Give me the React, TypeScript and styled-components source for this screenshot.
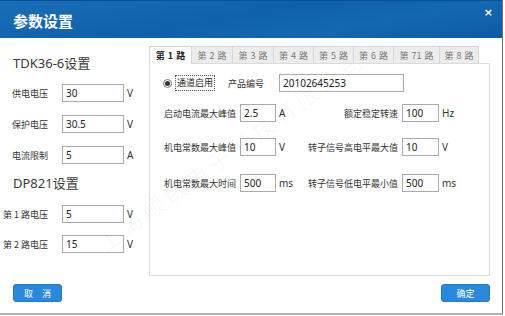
import styled, { createGlobalStyle } from "styled-components";

const GlobalStyle = createGlobalStyle`
body {
    margin: 0;
    background: #fff;
    font-family: "Noto Sans", "Noto Sans CJK SC", sans-serif;
}
`

const Window = styled.div`
position: relative;
width: 503px;
height: 315px;
box-sizing: border-box;
border-right: 1px solid #6f6f6f;
border-bottom: 2px solid #b4b4b4;
display: flex;
flex-direction: column;
background: #fff;
overflow: hidden;
`

const TitleBar = styled.div`
position: relative;
height: 38px;
flex-shrink: 0;
display: flex;
align-items: center;
padding-left: 13px;
background: linear-gradient(170deg, #1a6db8 0%, #0f61ab 45%, #1467b1 70%, #0d5ba4 100%);
border-top: 1px solid #0b4f90;
box-sizing: border-box;
`

const Title = styled.h1`
margin: 2px 0 0;
font-size: 15px;
font-weight: bold;
color: #fff;
font-family: "Noto Sans CJK SC", sans-serif;
`

const Close = styled.span`
position: absolute;
right: 9px;
top: 5px;
color: #fff;
font-size: 11px;
font-weight: bold;
font-family: "DejaVu Sans", sans-serif;
`

const Main = styled.div`
display: flex;
height: 238px;
`

const Side = styled.div`
width: 149px;
flex-shrink: 0;
padding-top: 17px;
box-sizing: border-box;
`

const Heading = styled.div<{ $mt?: number }>`
margin: ${p => p.$mt ?? 0}px 0 0 13px;
font-size: 13px;
line-height: 16px;
color: #3a3a3a;
font-family: "Noto Sans", "Noto Sans CJK SC", sans-serif;
`

const SideRow = styled.div<{ $mt: number }>`
display: flex;
align-items: center;
height: 18px;
margin-top: ${p => p.$mt}px;
`

const SideLabel = styled.span`
width: 48px;
text-align: right;
font-size: 9px;
color: #333;
white-space: nowrap;
font-family: "Noto Sans CJK SC", sans-serif;
`

const Input = styled.input<{ $w: number }>`
width: ${p => p.$w}px;
height: 18px;
box-sizing: border-box;
margin: 0 0 0 ${p => (p.$w > 50 ? 0 : 4)}px;
padding: 0 3px;
border: 1px solid #a9a9a9;
background: #fff;
font-size: 10px;
color: #222;
font-family: "Noto Sans", sans-serif;
outline: none;
`

const SideInput = styled(Input)`
margin-left: 14px;
`

const Unit = styled.span<{ $w?: number }>`
width: ${p => p.$w ?? 20}px;
padding-left: 3px;
box-sizing: border-box;
font-size: 10px;
color: #333;
font-family: "Noto Sans", sans-serif;
`

const Tabs = styled.div`
margin-top: 8px;
width: 341px;
display: flex;
flex-direction: column;
`

const TabList = styled.div`
display: flex;
height: 17px;
position: relative;
z-index: 1;
`

const Tab = styled.div<{ $active?: boolean; $w: number }>`
width: ${p => p.$w}px;
box-sizing: border-box;
height: ${p => (p.$active ? 18 : 17)}px;
display: flex;
align-items: center;
justify-content: center;
font-size: 9px;
font-family: "Noto Sans CJK SC", sans-serif;
color: ${p => (p.$active ? "#222" : "#777")};
font-weight: ${p => (p.$active ? "bold" : "normal")};
background: ${p => (p.$active ? "#fff" : "#ececec")};
border: 1px solid #d6d6d6;
border-bottom: none;
margin-right: -1px;
word-spacing: 1px;
`

const Panel = styled.div`
height: 213px;
box-sizing: border-box;
border: 1px solid #dcdcdc;
background: #fff;
padding-top: 10px;
`

const Row = styled.div<{ $mt?: number }>`
display: flex;
align-items: center;
height: 18px;
margin-top: ${p => p.$mt ?? 0}px;
`

const Radio = styled.span`
width: 9px;
height: 9px;
margin-left: 13px;
box-sizing: border-box;
border: 1px solid #7a7a7a;
border-radius: 50%;
display: flex;
align-items: center;
justify-content: center;
background: #fff;
&::after {
    content: "";
    width: 5px;
    height: 5px;
    border-radius: 50%;
    background: #333;
}
`

const RadioText = styled.span`
margin-left: 3px;
padding: 1px 1px;
border: 1px dotted #555;
font-size: 9px;
line-height: 12px;
color: #222;
font-family: "Noto Sans CJK SC", sans-serif;
`

const FieldLabel = styled.span<{ $w: number; $right?: boolean; $ml?: number }>`
width: ${p => p.$w}px;
margin-left: ${p => p.$ml ?? 0}px;
flex-shrink: 0;
text-align: ${p => (p.$right ? "right" : "left")};
font-size: 9px;
color: #333;
white-space: nowrap;
font-family: "Noto Sans CJK SC", sans-serif;
`

const Footer = styled.div`
display: flex;
justify-content: space-between;
padding: 8px 12px 0 13px;
`

const Button = styled.button`
width: 49px;
height: 18px;
border: 1px solid #1f7acd;
border-radius: 3px;
background: #2a88dd;
color: #fff;
font-size: 9px;
padding: 0;
font-family: "Noto Sans CJK SC", sans-serif;
`

const Watermark = styled.div`
position: absolute;
left: 100px;
top: 232px;
font-size: 22px;
line-height: 26px;
letter-spacing: 5px;
color: rgba(0, 0, 0, 0.035);
transform: rotate(-36deg);
transform-origin: left center;
white-space: nowrap;
pointer-events: none;
font-family: "Noto Sans CJK SC", sans-serif;
`

const tabs = [
    { t: "第 1 路", w: 43 },
    { t: "第 2 路", w: 42 },
    { t: "第 3 路", w: 42 },
    { t: "第 4 路", w: 41 },
    { t: "第 5 路", w: 41 },
    { t: "第 6 路", w: 41 },
    { t: "第 71 路", w: 47 },
    { t: "第 8 路", w: 40 },
]

const fields = [
    { a: "启动电流最大峰值", av: "2.5", au: "A", b: "额定稳定转速", bv: "100", bu: "Hz", mt: 12 },
    { a: "机电常数最大峰值", av: "10", au: "V", b: "转子信号高电平最大值", bv: "10", bu: "V", mt: 16 },
    { a: "机电常数最大时间", av: "500", au: "ms", b: "转子信号低电平最小值", bv: "500", bu: "ms", mt: 18 },
]

function App() {
    return (
        <>
            <GlobalStyle />
            <Window>
                <TitleBar>
                    <Title>参数设置</Title>
                    <Close>×</Close>
                </TitleBar>
                <Main>
                    <Side>
                        <Heading>TDK36-6设置</Heading>
                        <SideRow $mt={13}>
                            <SideLabel>供电电压</SideLabel>
                            <SideInput $w={62} defaultValue="30" />
                            <Unit>V</Unit>
                        </SideRow>
                        <SideRow $mt={13}>
                            <SideLabel>保护电压</SideLabel>
                            <SideInput $w={62} defaultValue="30.5" />
                            <Unit>V</Unit>
                        </SideRow>
                        <SideRow $mt={13}>
                            <SideLabel>电流限制</SideLabel>
                            <SideInput $w={62} defaultValue="5" />
                            <Unit>A</Unit>
                        </SideRow>
                        <Heading $mt={11}>DP821设置</Heading>
                        <SideRow $mt={14}>
                            <SideLabel>第 1 路电压</SideLabel>
                            <SideInput $w={62} defaultValue="5" />
                            <Unit>V</Unit>
                        </SideRow>
                        <SideRow $mt={12}>
                            <SideLabel>第 2 路电压</SideLabel>
                            <SideInput $w={62} defaultValue="15" />
                            <Unit>V</Unit>
                        </SideRow>
                    </Side>
                    <Tabs>
                        <TabList>
                            {tabs.map((tab, i) => (
                                <Tab key={tab.t} $w={tab.w} $active={i === 0}>{tab.t}</Tab>
                            ))}
                        </TabList>
                        <Panel>
                            <Row>
                                <Radio />
                                <RadioText>通道启用</RadioText>
                                <FieldLabel $w={51} $ml={13}>产品编号</FieldLabel>
                                <Input $w={125} defaultValue="20102645253" />
                            </Row>
                            {fields.map(f => (
                                <Row key={f.a} $mt={f.mt}>
                                    <FieldLabel $w={86} $right>{f.a}</FieldLabel>
                                    <Input $w={36} defaultValue={f.av} />
                                    <Unit $w={30}>{f.au}</Unit>
                                    <FieldLabel $w={92} $right>{f.b}</FieldLabel>
                                    <Input $w={37} defaultValue={f.bv} />
                                    <Unit $w={30}>{f.bu}</Unit>
                                </Row>
                            ))}
                        </Panel>
                    </Tabs>
                </Main>
                <Footer>
                    <Button>取　消</Button>
                    <Button>确定</Button>
                </Footer>
                <Watermark>上海顺敏电子科技有限公司</Watermark>
            </Window>
        </>
    )
}

export default App;
